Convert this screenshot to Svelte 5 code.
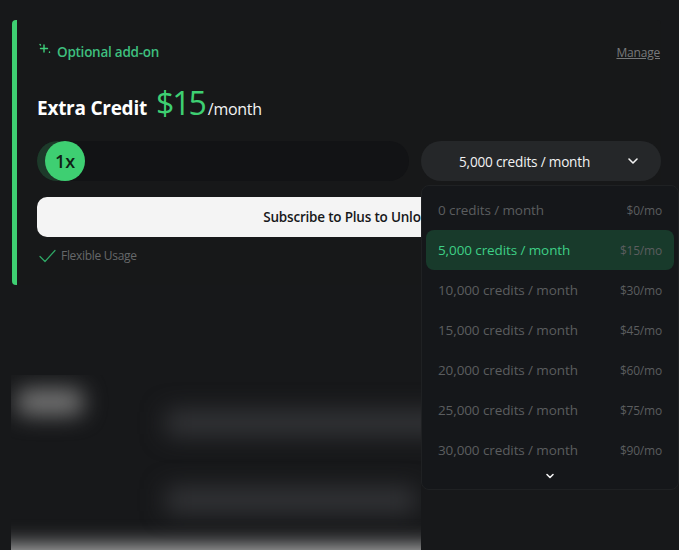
<script>
  const tiers = [
    { credits: '0', price: 0 },
    { credits: '5,000', price: 15 },
    { credits: '10,000', price: 30 },
    { credits: '15,000', price: 45 },
    { credits: '20,000', price: 60 },
    { credits: '25,000', price: 75 },
    { credits: '30,000', price: 90 }
  ];
  let selected = $state('5,000');
</script>

<div class="page">
  <section class="card">
    <div class="top">
      <span class="tag">
        <svg width="14" height="14" viewBox="0 0 14 14" fill="none" stroke="#3ecf7a" stroke-width="1.4" stroke-linecap="round">
          <path d="M6 2v7M2.5 5.5h7" />
          <path d="M11.5 9v.4M2 1.5l.5.5" />
        </svg>
        Optional add-on
      </span>
      <span class="manage">Manage</span>
    </div>

    <div class="title">
      <h2>Extra Credit</h2>
      <span class="price">$15</span>
      <span class="per">/month</span>
    </div>

    <div class="controls">
      <div class="track">
        <div class="fill"></div>
        <div class="thumb">1x</div>
      </div>
      <div class="select">
        <span>{selected} credits / month</span>
        <svg class="chev" width="12" height="12" viewBox="0 0 12 12" fill="none" stroke="#f2f2f2" stroke-width="1.6" stroke-linecap="round" stroke-linejoin="round">
          <path d="M2 4l4 4 4-4" />
        </svg>
      </div>
    </div>

    <button type="button" class="cta">Subscribe to Plus to Unlock</button>

    <div class="feature">
      <svg width="17" height="14" viewBox="0 0 17 14" fill="none" stroke="#2fa866" stroke-width="1.2" stroke-linecap="round" stroke-linejoin="round">
        <path d="M1 7.5l5 5L16 1.5" />
      </svg>
      Flexible Usage
    </div>

    <div class="menu">
      {#each tiers as t}
        <div class="opt" class:on={t.credits === selected}>
          <span class="name">{t.credits} credits / month</span>
          <span class="cost">${t.price}/mo</span>
        </div>
      {/each}
      <svg class="more" width="10" height="8" viewBox="0 0 10 8" fill="none" stroke="#f2f2f2" stroke-width="1.6" stroke-linecap="round" stroke-linejoin="round">
        <path d="M2 2.5l3 3 3-3" />
      </svg>
    </div>
  </section>

  <div class="blurred">
    <div class="blob logo"></div>
    <div class="blob line one"></div>
    <div class="blob line two"></div>
    <div class="blob strip"></div>
  </div>
</div>

<style>
  :global(body) {
    margin: 0;
    background: #17181a;
  }
  .page {
    position: relative;
    height: 550px;
    overflow: hidden;
    padding: 20px 18px 0 12px;
    box-sizing: border-box;
    font-family: "Open Sans", "Noto Sans", sans-serif;
    color: #f2f2f2;
  }
  .card {
    position: relative;
    z-index: 2;
    height: 265px;
    box-sizing: border-box;
    border-left: 5px solid #3ecf72;
    border-radius: 4px;
    padding: 23px 0 0 20px;
    background: #171819;
  }
  .top {
    display: flex;
    justify-content: space-between;
    align-items: center;
    height: 18px;
  }
  .tag {
    display: flex;
    align-items: center;
    gap: 5px;
    margin-left: 1px;
    font-size: 13.5px;
    font-weight: 600;
    letter-spacing: -0.25px;
    color: #3ebf7e;
  }
  .tag svg { margin-top: -5px; }
  .manage {
    margin-right: 1px;
    font-size: 12px;
    color: #77797b;
    text-decoration: underline;
    letter-spacing: -0.2px;
  }
  .title {
    display: flex;
    align-items: baseline;
    margin-top: 20px;
    height: 49px;
  }
  h2 {
    margin: 0;
    font-size: 19px;
    font-weight: 700;
    letter-spacing: -0.25px;
    color: #fff;
  }
  .price {
    margin-left: 9px;
    font-size: 32px;
    font-weight: 500;
    letter-spacing: -2px;
    color: #3ecf72;
  }
  .per {
    margin-left: 3px;
    font-size: 16px;
    letter-spacing: -0.3px;
  }
  .controls {
    display: grid;
    grid-template-columns: 372px 240px;
    gap: 12px;
    margin-top: 11px;
  }
  .track {
    position: relative;
    height: 40px;
    border-radius: 20px;
    background: #121315;
  }
  .fill {
    width: 40px;
    height: 40px;
    border-radius: 20px;
    background: #1d3a2a;
  }
  .thumb {
    position: absolute;
    left: 8px;
    top: 0;
    width: 40px;
    height: 40px;
    border-radius: 50%;
    display: flex;
    align-items: center;
    justify-content: center;
    background: #3ecf72;
    color: #0f1f16;
    font-size: 18px;
    font-weight: 600;
  }
  .select {
    display: flex;
    align-items: center;
    justify-content: space-between;
    height: 40px;
    padding: 0 22px 0 38px;
    border-radius: 20px;
    background: #252729;
    font-size: 13.6px;
    font-weight: 500;
    letter-spacing: -0.2px;
  }
  .cta {
    display: block;
    width: 624px;
    height: 40px;
    margin-top: 16px;
    border: 0;
    border-radius: 10px;
    background: #f4f4f4;
    color: #17181a;
    font: 600 13.5px "Open Sans", "Noto Sans", sans-serif;
    letter-spacing: -0.2px;
  }
  .feature {
    display: flex;
    align-items: center;
    gap: 5px;
    margin: 10px 0 0 2px;
    font-size: 12px;
    letter-spacing: -0.3px;
    color: #66686a;
  }
  .menu {
    position: absolute;
    left: 404px;
    top: 165px;
    width: 258px;
    height: 305px;
    box-sizing: border-box;
    padding: 4px;
    background: #15171a;
    border: 1px solid #1f2123;
    border-radius: 8px;
    z-index: 3;
  }
  .opt {
    display: flex;
    align-items: center;
    justify-content: space-between;
    height: 40px;
    padding: 0 12px;
    border-radius: 8px;
    font-size: 13.5px;
    letter-spacing: -0.1px;
    color: #5b5d5f;
  }
  .opt.on {
    background: #183a2b;
  }
  .opt.on .name {
    color: #3ecf86;
  }
  .cost {
    font-size: 12px;
    letter-spacing: -0.2px;
    color: #5b5d5f;
  }
  .more {
    display: block;
    margin: 2px auto 0;
  }
  .blurred {
    position: absolute;
    left: 11px;
    top: 375px;
    width: 410px;
    height: 175px;
    overflow: hidden;
  }
  .blob {
    position: absolute;
    filter: blur(11px);
  }
  .logo {
    left: 6px;
    top: 14px;
    width: 66px;
    height: 26px;
    border-radius: 8px;
    background: #777;
  }
  .line {
    left: 155px;
    height: 24px;
    background: #36373a;
    filter: blur(12px);
  }
  .one { top: 36px; width: 280px; }
  .two { top: 113px; width: 250px; }
  .strip {
    left: -30px;
    right: -30px;
    top: 171px;
    height: 30px;
    background: #bbb;
  }
</style>
